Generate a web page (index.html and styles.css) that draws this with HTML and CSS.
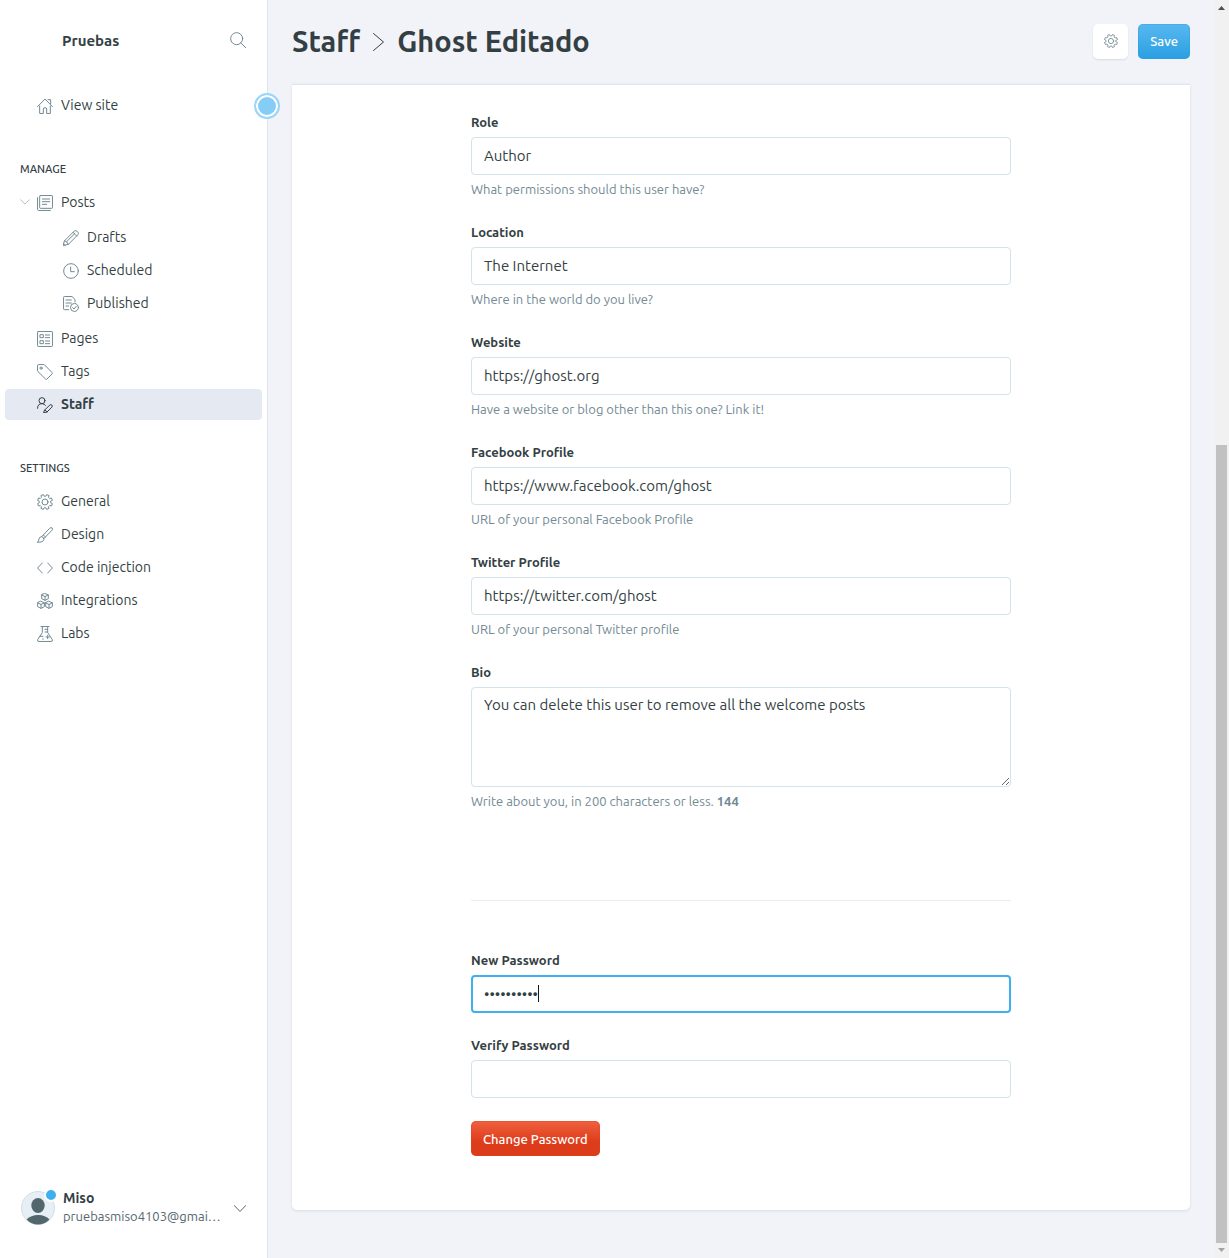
FILE: index.html
```html
<!DOCTYPE html>
<html lang="en">
<head>
<meta charset="utf-8">
<meta name="viewport" content="width=device-width, initial-scale=1">
<title>Staff - Ghost Editado</title>
<link rel="stylesheet" href="styles.css">
</head>
<body>
<div class="app">
  <aside class="sidebar">
    <span class="pulse" aria-hidden="true"></span>
    <header class="site">
      <span class="site-name">Pruebas</span>
      <button class="icon-button" type="button" aria-label="Search">
        <svg class="icon" viewBox="0 0 24 24"><circle cx="10" cy="10" r="9"/><path d="M16.5 16.5 23.5 23.5"/></svg>
      </button>
    </header>
    <nav class="nav" aria-label="Main">
      <ul class="nav-list">
        <li><a class="nav-link" href="#"><svg class="icon" viewBox="0 0 24 24"><path d="M.8 13 12 1.500 23.200 13M4 12v11.200h5.500V16.500q0-2 2.500-2t2.500 2v6.700H20V12M16.500 2.500h4v6"/></svg>View site</a></li>
      </ul>
      <section class="nav-section">
        <h2 class="nav-title">Manage</h2>
        <ul class="nav-list">
          <li>
            <a class="nav-link" href="#"><svg class="chevron chevron-small" viewBox="0 0 12 7"><path d="M.8.8 6 6 11.200.8"/></svg><svg class="icon" viewBox="0 0 24 24"><rect x="4" y=".8" width="19.200" height="19.200" rx="1"/><path d="M.8 4v17.700q0 1.500 1.500 1.500H20M8 6h11M8 10h11M8 14h6.500"/></svg>Posts</a>
            <ul class="nav-list nav-sub">
              <li><a class="nav-link" href="#"><svg class="icon" viewBox="0 0 24 24"><path d="M2.500 16 16.800 1.700q1.900-1.700 4.200.1l1.300 1.300q1.700 2.200 0 4.100L8 21.500.8 23.200zM2.500 16q3.500.5 5.500 5.500M15 3.500l5.500 5.500M5.500 17.500 17.800 5.200M.9 20.500q1.500.5 2.300 2.200"/></svg>Drafts</a></li>
              <li><a class="nav-link" href="#"><svg class="icon" viewBox="0 0 24 24"><circle cx="12" cy="12" r="11"/><path d="M11.500 6v7H17"/></svg>Scheduled</a></li>
              <li><a class="nav-link" href="#"><svg class="icon" viewBox="0 0 24 24"><path d="M8.500 20.500H2q-1.200 0-1.200-1.200V2Q.8.8 2 .8h11.500L18 5.200V9M4.500 6h8M4.500 10.500h8M4.500 15h4"/><circle cx="17.200" cy="17.200" r="6"/><path d="m14.500 17.500 2 2 3.500-4.200"/></svg>Published</a></li>
            </ul>
          </li>
          <li><a class="nav-link" href="#"><svg class="icon" viewBox="0 0 24 24"><rect x=".8" y=".8" width="22.400" height="22.400" rx="1"/><path d="M5 5.500h4.500V10H5zM5 14.500h4.500V19H5zM12.500 6H19M12.500 10H19M12.500 15H19M12.500 19H19"/></svg>Pages</a></li>
          <li><a class="nav-link" href="#"><svg class="icon" viewBox="0 0 24 24"><path d="M.8 2.300Q.8.8 2.300.8h7.500q1 0 1.700.7L22.600 12.900q1 1 0 2l-7.700 7.700q-1 1-2 0L1.500 11.500q-.7-.7-.7-1.700z"/><circle cx="6.200" cy="6.200" r="1.700"/></svg>Tags</a></li>
          <li><a class="nav-link nav-link-active" href="#" aria-current="page"><svg class="icon" viewBox="0 0 24 24"><circle cx="7.500" cy="5.500" r="4.500"/><path d="M.8 17q0-7 6.700-7 3.500 0 5.200 2.500M11.500 19.500l7.800-7.500q1.600-1.200 3 .1 1.300 1.500.1 3L15 22.500l-4.500 1zM11.500 19.500q2.500.5 3.500 3"/></svg>Staff</a></li>
        </ul>
      </section>
      <section class="nav-section">
        <h2 class="nav-title">Settings</h2>
        <ul class="nav-list">
          <li><a class="nav-link" href="#"><svg class="icon" viewBox="0 0 24 24"><circle cx="12" cy="12" r="4.500"/><path d="M20.700 13.300 23.100 14.500 21.600 18.100 19.100 17.200 17.200 19.100 18.100 21.600 14.500 23.100 13.300 20.700H10.700L9.500 23.100 5.900 21.600 6.800 19.100 4.900 17.200 2.400 18.100.9 14.500 3.300 13.300V10.700L.9 9.500 2.400 5.900 4.900 6.800 6.800 4.900 5.900 2.400 9.500.9 10.700 3.300H13.300L14.500.9 18.100 2.400 17.200 4.900 19.100 6.800 21.600 5.900 23.100 9.500 20.700 10.700z"/></svg>General</a></li>
          <li><a class="nav-link" href="#"><svg class="icon" viewBox="0 0 24 24"><path d="M.8 22.800q2-1 2-4 .3-4 4-4.300 3.500.5 3.500 4-.8 5-9.500 4.300zM7 14.500 19 2q2-2 3.600-.6Q24 3 22.300 5L10.200 17.500M9.500 12l3.200 3"/></svg>Design</a></li>
          <li><a class="nav-link" href="#"><svg class="icon" viewBox="0 0 24 24"><path d="M8 4.500.9 12 8 19.500M16 4.500l7.100 7.500-7.100 7.500"/></svg>Code injection</a></li>
          <li><a class="nav-link" href="#"><svg class="icon" viewBox="0 0 24 24"><path d="M12 .8 17 3v5.500L12 11 7 8.500V3zM7 3l5 2.300L17 3M12 5.300V11M6 12.500l5 2.300v5.700l-5 2.500-5-2.500v-5.700zM1 14.800l5 2.400 5-2.400M6 17.200V23M18 12.500l5 2.300v5.700L18 23l-5-2.500v-5.700zM13 14.800l5 2.400 5-2.400M18 17.200V23"/></svg>Integrations</a></li>
          <li><a class="nav-link" href="#"><svg class="icon" viewBox="0 0 24 24"><path d="M6 .8h12M8 .8v9L1 20.500q-1 2.700 2 2.700h18q3 0 2-2.700L16 9.800v-9M12 5h4M12 9h4M4.500 15.500H9M16 14v5M13.500 16.500h5M8.500 19.500h1"/></svg>Labs</a></li>
        </ul>
      </section>
    </nav>
    <button class="account" type="button">
      <span class="avatar">
        <svg class="avatar-image" viewBox="0 0 34 34" aria-hidden="true"><circle cx="17" cy="17" r="16.500" fill="#e5eff5" stroke="#d3dde5"/><ellipse cx="17" cy="14.500" rx="6.700" ry="7.500" fill="#54666d"/><path d="M5.500 28.500Q10 24.200 17 24t11.500 4.500Q23.500 33.500 17 33.500T5.500 28.500z" fill="#54666d"/></svg>
        <span class="avatar-badge"></span>
      </span>
      <span class="account-text">
        <span class="account-name">Miso</span>
        <span class="account-email">pruebasmiso4103@gmai…</span>
      </span>
      <svg class="chevron" viewBox="0 0 12 7"><path d="M.3.500 6 6.500 11.700.5"/></svg>
    </button>
  </aside>

  <main class="main">
    <header class="page-header">
      <h1 class="page-title"><a class="page-parent" href="#">Staff</a><svg class="title-arrow" viewBox="0 0 11 18"><path d="M.5.500 10.500 9 .5 17.500"/></svg>Ghost Editado</h1>
      <button class="button button-settings" type="button" aria-label="User settings">
        <svg class="icon icon-small" viewBox="0 0 24 24"><circle cx="12" cy="12" r="4.500"/><path d="M20.700 13.300 23.100 14.500 21.600 18.100 19.100 17.200 17.200 19.100 18.100 21.600 14.500 23.100 13.300 20.700H10.700L9.500 23.100 5.900 21.600 6.800 19.100 4.900 17.200 2.400 18.100.9 14.500 3.300 13.300V10.700L.9 9.500 2.400 5.900 4.900 6.800 6.800 4.900 5.900 2.400 9.500.9 10.700 3.300H13.300L14.500.9 18.100 2.400 17.200 4.900 19.100 6.800 21.600 5.900 23.100 9.500 20.700 10.700z"/></svg>
      </button>
      <button class="button button-save" type="submit" form="profile">Save</button>
    </header>
    <div class="card">
      <form class="form" id="profile">
        <div class="field"><label for="role">Role</label><input class="control" id="role" type="text" value="Author"><p class="hint">What permissions should this user have?</p></div>
        <div class="field"><label for="location">Location</label><input class="control" id="location" type="text" value="The Internet"><p class="hint">Where in the world do you live?</p></div>
        <div class="field"><label for="website">Website</label><input class="control" id="website" type="text" value="https://ghost.org"><p class="hint">Have a website or blog other than this one? Link it!</p></div>
        <div class="field"><label for="facebook">Facebook Profile</label><input class="control" id="facebook" type="text" value="https://www.facebook.com/ghost"><p class="hint">URL of your personal Facebook Profile</p></div>
        <div class="field"><label for="twitter">Twitter Profile</label><input class="control" id="twitter" type="text" value="https://twitter.com/ghost"><p class="hint">URL of your personal Twitter profile</p></div>
        <div class="field"><label for="bio">Bio</label><textarea class="control control-area" id="bio">You can delete this user to remove all the welcome posts</textarea><p class="hint">Write about you, in 200 characters or less. <b>144</b></p></div>
      </form>
      <hr class="divider">
      <form class="form form-password">
        <div class="field"><label for="password">New Password</label><input class="control control-secret" id="password" type="password" value="contrasena" autofocus><span class="caret" aria-hidden="true"></span></div>
        <div class="field"><label for="verify">Verify Password</label><input class="control" id="verify" type="password"></div>
        <button class="button button-danger" type="submit">Change Password</button>
      </form>
    </div>
  </main>

  <div class="scrollbar" aria-hidden="true">
    <svg class="scroll-arrow" viewBox="0 0 15 15"><path d="M4 10h7L7.500 6z" fill="#505050"/></svg>
    <div class="scroll-track"><div class="scroll-thumb"></div></div>
    <svg class="scroll-arrow" viewBox="0 0 15 15"><path d="M4 5h7L7.500 9z" fill="#a3a3a3"/></svg>
  </div>
</div>
</body>
</html>
```
FILE: styles.css
```css
*, *::before, *::after { box-sizing: border-box; }

body {
  margin: 0;
  background: #f1f3f8;
  color: #343f44;
  font: 14px/20px Ubuntu, "Noto Sans", sans-serif;
}

h1, h2, p, ul { margin: 0; padding: 0; }
ul { list-style: none; }
a { color: inherit; text-decoration: none; }
button, input, textarea { font: inherit; color: inherit; }
button { cursor: pointer; }

.app { display: flex; min-height: 100vh; }

/* Sidebar */
.sidebar {
  position: relative;
  display: flex;
  flex-direction: column;
  flex: 0 0 268px;
  background: #fff;
  border-right: 1px solid #dfe4ec;
}

.pulse {
  position: absolute;
  top: 93px;
  right: -13px;
  width: 26px;
  height: 26px;
  border: 2px solid #9bd6f8;
  border-radius: 50%;
  background: #85cdf7;
  box-shadow: inset 0 0 0 2px #fff;
}

.site {
  display: flex;
  align-items: center;
  justify-content: space-between;
  height: 80px;
  padding: 0 21px 0 62px;
}
.site-name { padding-top: 2px; font-size: 15px; font-weight: 700; }

.icon-button { display: flex; padding: 0; border: 0; background: none; }
.icon, .chevron, .title-arrow { flex: none; fill: none; stroke: #738a94; stroke-width: 1.5; stroke-linecap: round; stroke-linejoin: round; }
.icon { width: 16px; height: 16px; }
.icon-small { width: 14px; height: 14px; }

.nav { padding: 10px 5px 0; }
.nav-list { display: grid; gap: 2px; }
.nav-section { margin-top: 38px; }
.nav-title {
  margin: 0 15px 8px;
  font-size: 11px;
  font-weight: 500;
  line-height: 20px;
  text-transform: uppercase;
}
.nav-link {
  position: relative;
  display: flex;
  align-items: center;
  gap: 8px;
  height: 31px;
  padding: 0 0 2px 32px;
  border-radius: 4px;
}
.nav-link .icon { margin-top: 2px; }
.nav-sub { margin: 4px 0 2px 26px; }
.nav-link-active { background: #e5eaf2; font-weight: 700; }
.nav-link-active .icon { stroke: #343f44; }

.chevron { width: 12px; height: 7px; stroke-width: 1; stroke: #54666d; }
.chevron-small { position: absolute; left: 15px; width: 10px; height: 6px; stroke: #a5b4bb; }

.account {
  display: flex;
  align-items: center;
  gap: 8px;
  margin-top: auto;
  padding: 0 21px 31px;
  border: 0;
  background: none;
  text-align: left;
}
.avatar { position: relative; flex: none; width: 34px; height: 34px; }
.avatar-image { display: block; width: 34px; height: 34px; }
.avatar-badge {
  position: absolute;
  top: -3px;
  right: -3px;
  width: 14px;
  height: 14px;
  border: 2px solid #fff;
  border-radius: 50%;
  background: #3eb0ef;
}
.account-text { display: grid; flex: 1; min-width: 0; padding-bottom: 2px; line-height: 18px; white-space: nowrap; }
.account-name { font-weight: 700; }
.account-email { color: #54666d; font-size: 13px; }
.account .chevron { margin-left: 4px; }

/* Main column */
.main { flex: 1; min-width: 0; padding: 0 24px 48px; }
.page-header { display: flex; align-items: center; gap: 10px; height: 84px; padding-bottom: 2px; }
.page-title { display: flex; align-items: center; flex: 1; font-size: 29px; line-height: 36px; }
.title-arrow { width: 11px; height: 18px; margin: 2px 13px 0; stroke: #343f44; stroke-width: 1; }

.button {
  height: 35px;
  padding: 0 12px;
  border: 0;
  border-radius: 5px;
  color: #fff;
  font-size: 13px;
  font-weight: 500;
}
.button-settings { display: flex; align-items: center; justify-content: center; width: 35px; padding: 0; background: #fff; box-shadow: 0 1px 2px #0000001a; }
.button-save { background: linear-gradient(#58b8f0, #2a9fe2); box-shadow: inset 0 0 0 1px #2d9fdf66; }
.button-danger { justify-self: start; background: linear-gradient(#f0603f, #dd3c1a 60%); box-shadow: inset 0 0 0 1px #e0452566; }

.card {
  padding: 27px 24px 54px;
  border-top: 1px solid #dae7ee;
  border-radius: 0 0 5px 5px;
  background: #fff;
  box-shadow: 0 1px 3px #0000001a;
}
.form, .divider { width: 100%; max-width: 540px; margin: 0 auto; }
.form { display: grid; gap: 23px; }
.form-password .field + .field { margin-top: -1px; }
.divider { margin: 89px auto 49px; border: 0; border-top: 1px solid #e5eff5; }

.field { position: relative; }
.field label { display: block; margin-bottom: 5px; font-size: 13px; font-weight: 700; }
.control {
  display: block;
  width: 100%;
  height: 38px;
  padding: 0 12px 2px;
  border: 1px solid #d4e2ea;
  border-radius: 4px;
  background: #fff;
  font-size: 15px;
}
.control:focus { outline: 0; border: 2px solid #3eb0ef; padding: 0 11px 2px; }
.control-area { height: 100px; padding: 7px 12px; resize: vertical; }
.control-secret { caret-color: transparent; }
.caret { position: absolute; bottom: 11px; left: 67px; width: 1px; height: 17px; background: #15171a; }
.hint { margin-top: 4px; color: #738a94; font-size: 13px; }

/* Scrollbar */
.scrollbar { display: flex; flex-direction: column; flex: 0 0 15px; background: #f1f1f1; }
.scroll-arrow { width: 15px; height: 15px; }
.scroll-track { display: flex; flex-direction: column; justify-content: flex-end; flex: 1; padding: 0 2px; }
.scroll-thumb { height: 65%; background: #c1c1c1; }
```
